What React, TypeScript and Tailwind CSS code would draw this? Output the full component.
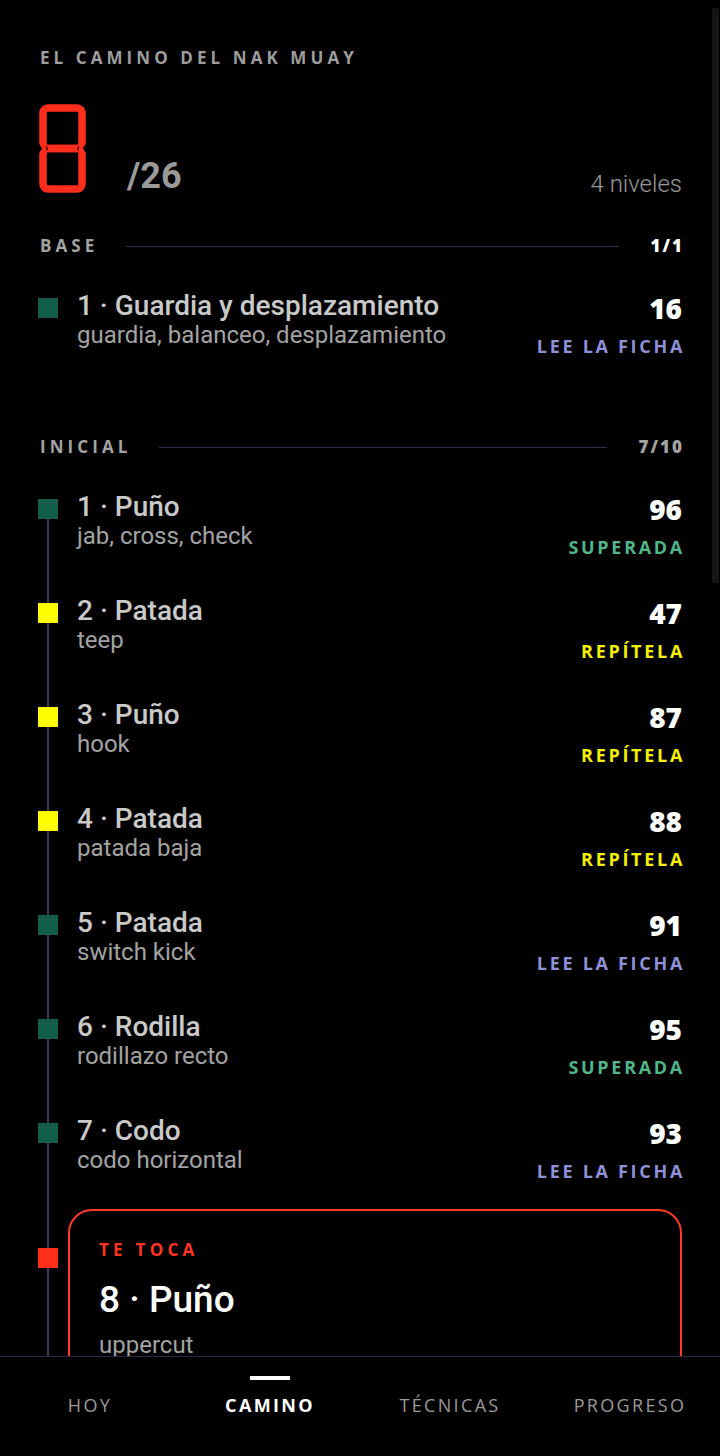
import React from "react";

type Item = {
  n: number;
  name: string;
  sub: string;
  score: number;
  status: "SUPERADA" | "REPÍTELA" | "LEE LA FICHA";
  color: "green" | "yellow";
};

const items: Item[] = [
  { n: 1, name: "Puño", sub: "jab, cross, check", score: 96, status: "SUPERADA", color: "green" },
  { n: 2, name: "Patada", sub: "teep", score: 47, status: "REPÍTELA", color: "yellow" },
  { n: 3, name: "Puño", sub: "hook", score: 87, status: "REPÍTELA", color: "yellow" },
  { n: 4, name: "Patada", sub: "patada baja", score: 88, status: "REPÍTELA", color: "yellow" },
  { n: 5, name: "Patada", sub: "switch kick", score: 91, status: "LEE LA FICHA", color: "green" },
  { n: 6, name: "Rodilla", sub: "rodillazo recto", score: 95, status: "SUPERADA", color: "green" },
  { n: 7, name: "Codo", sub: "codo horizontal", score: 93, status: "LEE LA FICHA", color: "green" },
];

const geo = { fontFamily: '"Open Sans", "Noto Sans", sans-serif' };
const grot = { fontFamily: 'Roboto, "Liberation Sans", sans-serif' };

function statusClass(s: Item["status"]) {
  if (s === "SUPERADA") return "text-[#4fb68a]";
  if (s === "REPÍTELA") return "text-[#f5f000]";
  return "text-[#8d92d8]";
}

function Digit() {
  return (
    <svg width="47" height="89" viewBox="0 0 47 89" className="block">
      <rect x="4" y="4" width="39" height="40.5" rx="5" fill="none" stroke="#ff2d1c" strokeWidth="7.5" />
      <rect x="4" y="44.5" width="39" height="40.5" rx="5" fill="none" stroke="#ff2d1c" strokeWidth="7.5" />
      <polygon points="0,40 3.2,44.5 0,49" fill="#000" />
      <polygon points="47,40 43.8,44.5 47,49" fill="#000" />
      <polygon points="7.5,41.5 9,44.5 7.5,47.5" fill="#000" />
      <polygon points="39.5,41.5 38,44.5 39.5,47.5" fill="#000" />
    </svg>
  );
}

function SectionHeader({ label, count, bright }: { label: string; count: string; bright?: boolean }) {
  return (
    <div className="flex items-center h-5 pl-[2px]" style={geo}>
      <span className="text-[17px] font-bold tracking-[0.24em] text-[#a3a3a3] leading-5">{label}</span>
      <div className="flex-1 h-px bg-[#2f2f4a] ml-[28px] mr-[31px]" />
      <span
        className={`text-[17px] font-extrabold tracking-[0.12em] mr-[-2px] leading-5 ${bright ? "text-white" : "text-[#a3a3a3]"}`}
      >
        {count}
      </span>
    </div>
  );
}

function Right({ score, status }: { score: number; status: Item["status"] }) {
  return (
    <div className="flex flex-col items-end" style={geo}>
      <div className="text-[28px] leading-[32px] font-extrabold text-white mt-px">{score}</div>
      <div className={`text-[18px] leading-5 font-bold tracking-[0.15em] mr-[-3px] mt-[12px] ${statusClass(status)}`}>
        {status}
      </div>
    </div>
  );
}

function Row({ item, first, last }: { item: Item; first: boolean; last?: boolean }) {
  return (
    <div className={`flex ${last ? "h-[93px]" : "h-[104px]"}`}>
      <div className="w-[39px] flex flex-col">
        <div className="w-5 h-[7px] flex justify-center">
          {!first && <div className="w-[2px] h-full bg-[#3a3a5a] ml-[-1px]" />}
        </div>
        <div className={`w-5 h-5 ${item.color === "yellow" ? "bg-[#ffff00]" : "bg-[#135e48]"}`} />
        <div className="w-5 flex-1 flex justify-center">
          <div className="w-[2px] h-full bg-[#3a3a5a] ml-[-1px]" />
        </div>
      </div>
      <div className="flex-1" style={grot}>
        <div className="text-[28px] leading-[30px] font-medium text-[#c9c9c9]">
          {item.n} · {item.name}
        </div>
        <div className="text-[24px] leading-[28px] text-[#a3a3a3]">{item.sub}</div>
      </div>
      <Right score={item.score} status={item.status} />
    </div>
  );
}

export default function App() {
  return (
    <div className="relative w-[720px] h-[1456px] bg-black overflow-hidden flex flex-col">
      <div className="relative h-[1356px] overflow-hidden">
        <div className="pl-[38px] pr-[38px] pt-[48px]">
          <p className="pl-[2px] h-5 leading-5 text-[17px] font-bold tracking-[0.24em] text-[#9d9d9d]" style={geo}>
            EL CAMINO DEL NAK MUAY
          </p>

          <div className="mt-[36px] flex items-end justify-between pl-[1px]">
            <div className="flex items-end">
              <Digit />
              <span className="ml-[41px] text-[36px] leading-[36px] font-bold text-[#9a9a9a] mb-[-1px]" style={grot}>
                /26
              </span>
            </div>
            <span className="text-[24px] leading-[24px] font-light text-[#9a9a9a] mb-[-3px]" style={grot}>
              4 niveles
            </span>
          </div>

          <div className="mt-[43px]">
            <SectionHeader label="BASE" count="1/1" bright />
          </div>

          <div className="mt-[35px] flex">
            <div className="w-[39px] pt-[7px]">
              <div className="w-5 h-5 bg-[#135e48]" />
            </div>
            <div className="flex-1" style={grot}>
              <div className="text-[28px] leading-[30px] font-medium text-[#c9c9c9]">1 · Guardia y desplazamiento</div>
              <div className="text-[24px] leading-[28px] text-[#a3a3a3]">guardia, balanceo, desplazamiento</div>
            </div>
            <Right score={16} status="LEE LA FICHA" />
          </div>

          <div className="mt-[81px]">
            <SectionHeader label="INICIAL" count="7/10" />
          </div>

          <div className="mt-[35px]">
            {items.map((it, i) => (
              <Row key={it.n} item={it} first={i === 0} last={i === items.length - 1} />
            ))}
            <div className="flex">
              <div className="w-[30px] flex flex-col">
                <div className="w-5 h-[39px] flex justify-center">
                  <div className="w-[2px] h-full bg-[#3a3a5a] ml-[-1px]" />
                </div>
                <div className="w-5 h-5 bg-[#ff2d1c]" />
                <div className="w-5 flex-1 flex justify-center">
                  <div className="w-[2px] h-full bg-[#3a3a5a] ml-[-1px]" />
                </div>
              </div>
              <div className="flex-1 border-2 border-[#ff3a28] rounded-[24px] pl-[29px] pt-[29px] pb-[40px]">
                <div className="text-[17px] leading-5 font-bold tracking-[0.25em] text-[#ff3322]" style={geo}>
                  TE TOCA
                </div>
                <div className="mt-[20px] text-[37px] leading-[40px] font-medium text-white" style={grot}>
                  8 · Puño
                </div>
                <div className="mt-[12px] text-[24px] leading-[26px] text-[#a3a3a3]" style={grot}>
                  uppercut
                </div>
              </div>
            </div>
          </div>
        </div>
        <div className="absolute right-[1px] top-[8px] w-[7px] h-[575px] rounded-[2px] bg-[#151515]" />
      </div>

      <nav className="h-[100px] border-t border-[#2a2a44] bg-black grid grid-cols-4" style={geo}>
        {[
          { l: "HOY", a: false },
          { l: "CAMINO", a: true },
          { l: "TÉCNICAS", a: false },
          { l: "PROGRESO", a: false },
        ].map((t) => (
          <div key={t.l} className="flex flex-col items-center pt-[19px]">
            <div className={`w-10 h-1 ${t.a ? "bg-white" : "bg-transparent"}`} />
            <span
              className={`mt-[15px] text-[18px] leading-5 tracking-[0.13em] ${
                t.a ? "text-white font-bold" : "text-[#9a9a9a]"
              }`}
            >
              {t.l}
            </span>
          </div>
        ))}
      </nav>
    </div>
  );
}
